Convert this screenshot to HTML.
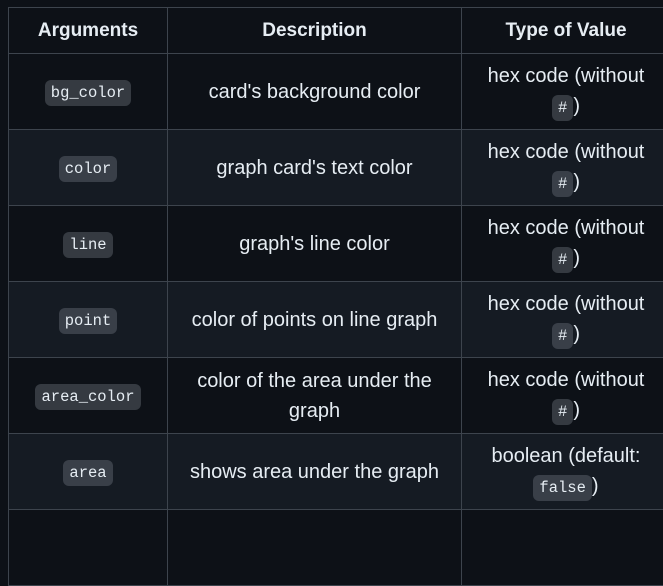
<!DOCTYPE html>
<html><head><style>
html,body{margin:0;background:#0d1117;width:663px;height:522px;overflow:hidden;font-family:"Liberation Sans","DejaVu Sans",sans-serif;color:#e6edf3}
.c{position:absolute;border:1px solid #3d444d;box-sizing:border-box;display:flex;align-items:center;justify-content:center;text-align:center;font-size:20px;line-height:30px;padding:0 13px}
.c>div{width:100%}
.c b{font-size:19px}
.alt{background:#151b23}
code{font-family:"Liberation Mono","DejaVu Sans Mono",monospace;font-size:15.5px;background:rgba(101,108,118,.45);border-radius:6px;padding:4px 6px}
</style></head><body>
<div id="t"></div>
<script>
const cols=[[8,160],[167,295],[461,210]];
const rows=[
 ["<b>Arguments</b>","<b>Description</b>","<b>Type of Value</b>"],
 ["<code>bg_color</code>","card's background color","hex code (without <code>#</code>)"],
 ["<code>color</code>","graph card's text color","hex code (without <code>#</code>)"],
 ["<code>line</code>","graph's line color","hex code (without <code>#</code>)"],
 ["<code>point</code>","color of points on line graph","hex code (without <code>#</code>)"],
 ["<code>area_color</code>","color of the area under the graph","hex code (without <code>#</code>)"],
 ["<code>area</code>","shows area under the graph","boolean (default: <code>false</code>)"],
 ["","",""]
];
let h="";let y=7;
rows.forEach((r,i)=>{const rh=i==0?47:77;
 r.forEach((txt,j)=>{let pad=j==2&&i>0?'padding:0 18px;':'';h+=`<div class="c${i%2==0&&i>0?' alt':''}" style="left:${cols[j][0]}px;top:${y}px;width:${cols[j][1]}px;height:${rh}px;${pad}"><div>${txt}</div></div>`;});
 y+=rh-1;});
document.getElementById('t').innerHTML=h;
</script>
</body></html>
